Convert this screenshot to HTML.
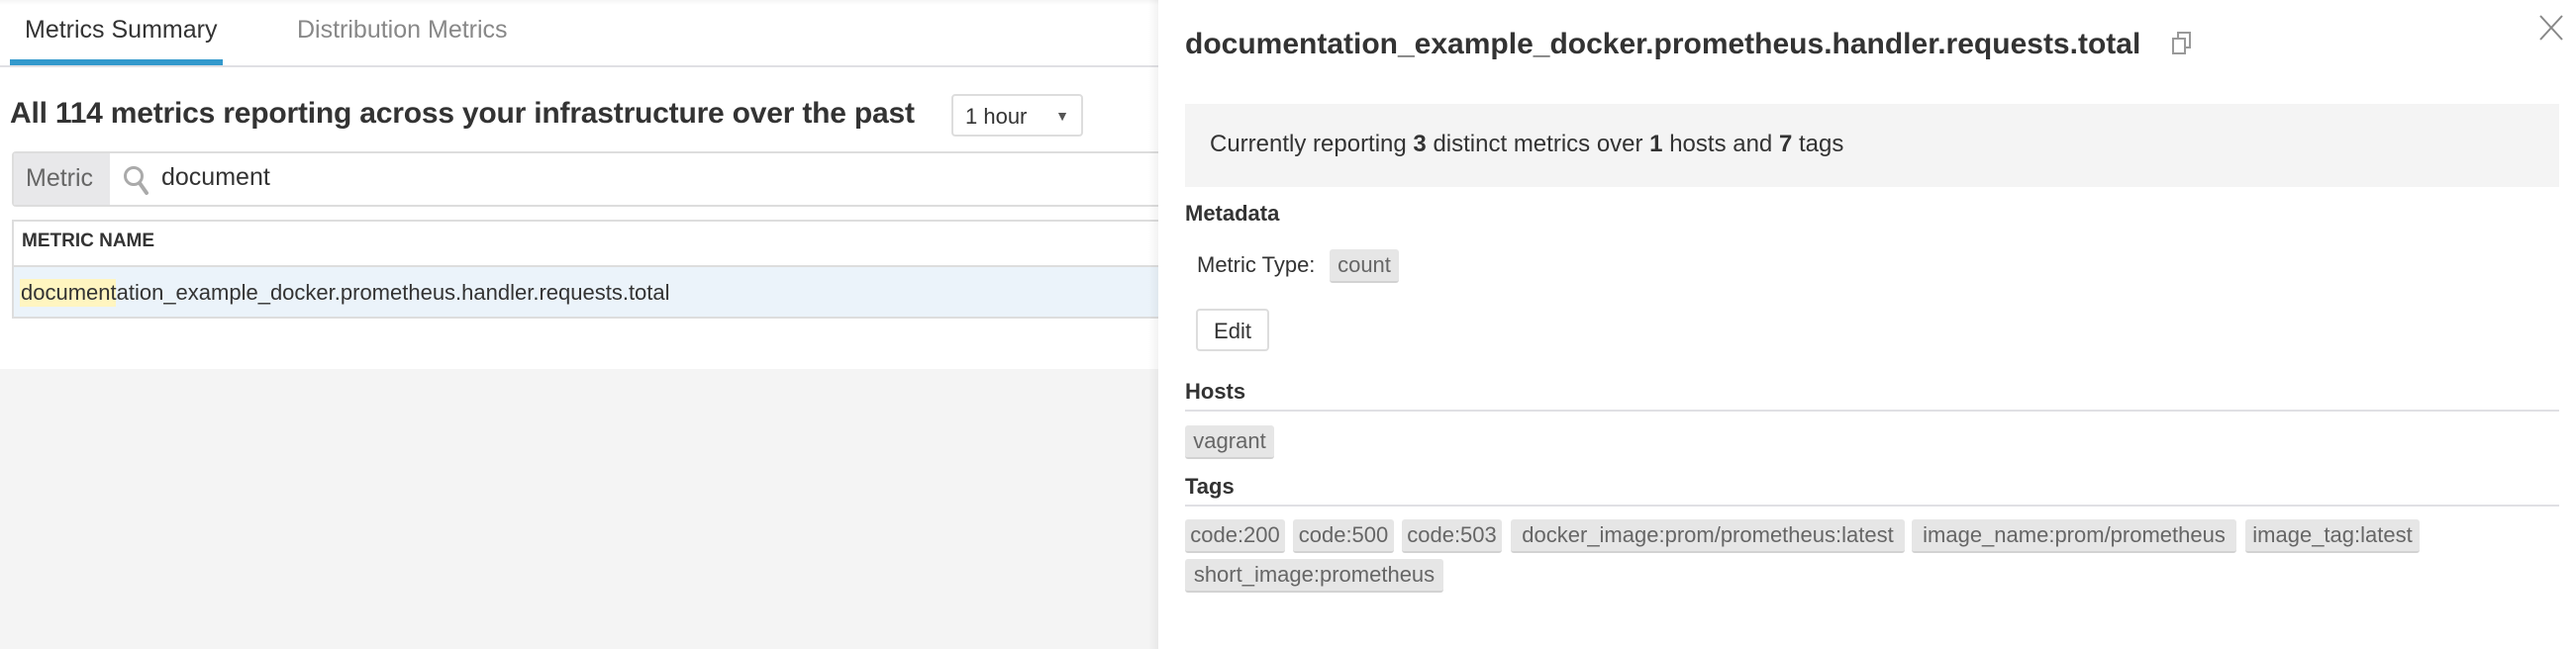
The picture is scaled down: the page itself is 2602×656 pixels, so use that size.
<!DOCTYPE html>
<html><head><meta charset="utf-8"><style>
*{box-sizing:border-box;margin:0;padding:0}
body{width:2602px;height:656px;overflow:hidden;background:#fff;font-family:"Liberation Sans","DejaVu Sans",sans-serif;color:#333;position:relative}
.a{position:absolute;white-space:nowrap}
.chip{position:absolute;background:#e6e6e6;border-radius:3px;border-bottom:2px solid #d2d2d2;color:#666;font-size:22px;display:flex;align-items:center;justify-content:center;height:34px}
.hdr{font-weight:bold;font-size:22px;color:#333}
</style></head><body>
<!-- left -->
<div class="a" style="left:0;top:0;width:1170px;height:5px;background:linear-gradient(#f5f5f5,#fff)"></div>
<div class="a" style="left:25px;top:16px;font-size:25px;color:#333">Metrics Summary</div>
<div class="a" style="left:300px;top:16px;font-size:25px;color:#888">Distribution Metrics</div>
<div class="a" style="left:10px;top:60px;width:215px;height:6px;background:#3399cc"></div>
<div class="a" style="left:0;top:66px;width:1170px;height:2px;background:#e0e0e4"></div>
<div class="a" style="left:10px;top:98px;font-size:30px;font-weight:bold;color:#333;letter-spacing:-0.2px">All 114 metrics reporting across your infrastructure over the past</div>
<div class="a" style="left:961px;top:95px;width:133px;height:43px;border:2px solid #ddd;border-radius:4px;font-size:22px;padding:8px 12px;color:#333">1 hour<span style="position:absolute;right:12px;top:12px;font-size:14px;color:#555">▼</span></div>
<div class="a" style="left:12px;top:153px;width:1160px;height:56px;border:2px solid #ddd;border-right:none;border-radius:4px 0 0 4px"></div>
<div class="a" style="left:14px;top:155px;width:97px;height:52px;background:#e8e8ea;font-size:25px;color:#666;padding:11px 0 0 12px">Metric</div>
<svg class="a" style="left:123px;top:166px" width="30" height="32" viewBox="0 0 30 32"><circle cx="12" cy="12" r="8.5" fill="none" stroke="#aaa" stroke-width="3"/><path d="M18 19 L25 29" stroke="#aaa" stroke-width="4" stroke-linecap="round"/></svg>
<div class="a" style="left:163px;top:165px;font-size:25px;color:#333">document</div>
<div class="a" style="left:12px;top:222px;width:1160px;height:100px;border:2px solid #ddd;border-right:none"></div>
<div class="a" style="left:22px;top:233px;font-size:19px;font-weight:bold;color:#333">METRIC NAME</div>
<div class="a" style="left:14px;top:268px;width:1158px;height:52px;background:#ebf3fa;border-top:2px solid #ddd"></div>
<div class="a" style="left:20px;top:282px;width:97px;height:28px;background:#fff5c0"></div>
<div class="a" style="left:21px;top:283px;font-size:22px;color:#333">documentation_example_docker.prometheus.handler.requests.total</div>
<div class="a" style="left:0;top:373px;width:1170px;height:283px;background:#f4f4f4"></div>
<!-- right panel -->
<div class="a" style="left:1160px;top:0;width:12px;height:656px;background:linear-gradient(90deg,rgba(0,0,0,0),rgba(0,0,0,.06))"></div>
<div class="a" style="left:1170px;top:0;width:1432px;height:656px;background:#fff"></div>
<div class="a" style="left:1197px;top:28px;font-size:30px;font-weight:bold;color:#333">documentation_example_docker.prometheus.handler.requests.total</div>
<svg class="a" style="left:2192px;top:31px" width="24" height="26" viewBox="0 0 24 26"><rect x="8" y="2" width="12" height="15" fill="none" stroke="#999" stroke-width="2"/><rect x="3" y="8" width="12" height="15" fill="#fff" stroke="#999" stroke-width="2"/></svg>
<svg class="a" style="left:2564px;top:14px" width="26" height="28"><path d="M2 2L24 26M24 2L2 26" stroke="#888" stroke-width="2"/></svg>
<div class="a" style="left:1197px;top:105px;width:1388px;height:84px;background:#f4f4f4"></div>
<div class="a" style="left:1222px;top:132px;font-size:24px;color:#333">Currently reporting <b>3</b> distinct metrics over <b>1</b> hosts and <b>7</b> tags</div>
<div class="a hdr" style="left:1197px;top:203px">Metadata</div>
<div class="a" style="left:1209px;top:255px;font-size:22px;color:#333">Metric Type:</div>
<div class="chip" style="left:1343px;top:252px;width:70px">count</div>
<div class="a" style="left:1208px;top:312px;width:74px;height:43px;border:2px solid #ddd;border-radius:4px;font-size:22px;text-align:center;padding-top:8px;color:#333">Edit</div>
<div class="a hdr" style="left:1197px;top:383px">Hosts</div>
<div class="a" style="left:1197px;top:414px;width:1388px;height:2px;background:#e0e0e4"></div>
<div class="chip" style="left:1197px;top:430px;width:90px">vagrant</div>
<div class="a hdr" style="left:1197px;top:479px">Tags</div>
<div class="a" style="left:1197px;top:510px;width:1388px;height:2px;background:#e0e0e4"></div>
<div class="chip" style="left:1197px;top:525px;width:101px">code:200</div>
<div class="chip" style="left:1306px;top:525px;width:102px">code:500</div>
<div class="chip" style="left:1416px;top:525px;width:101px">code:503</div>
<div class="chip" style="left:1526px;top:525px;width:398px">docker_image:prom/prometheus:latest</div>
<div class="chip" style="left:1931px;top:525px;width:328px">image_name:prom/prometheus</div>
<div class="chip" style="left:2268px;top:525px;width:176px">image_tag:latest</div>
<div class="chip" style="left:1197px;top:565px;width:261px">short_image:prometheus</div>
</body></html>
